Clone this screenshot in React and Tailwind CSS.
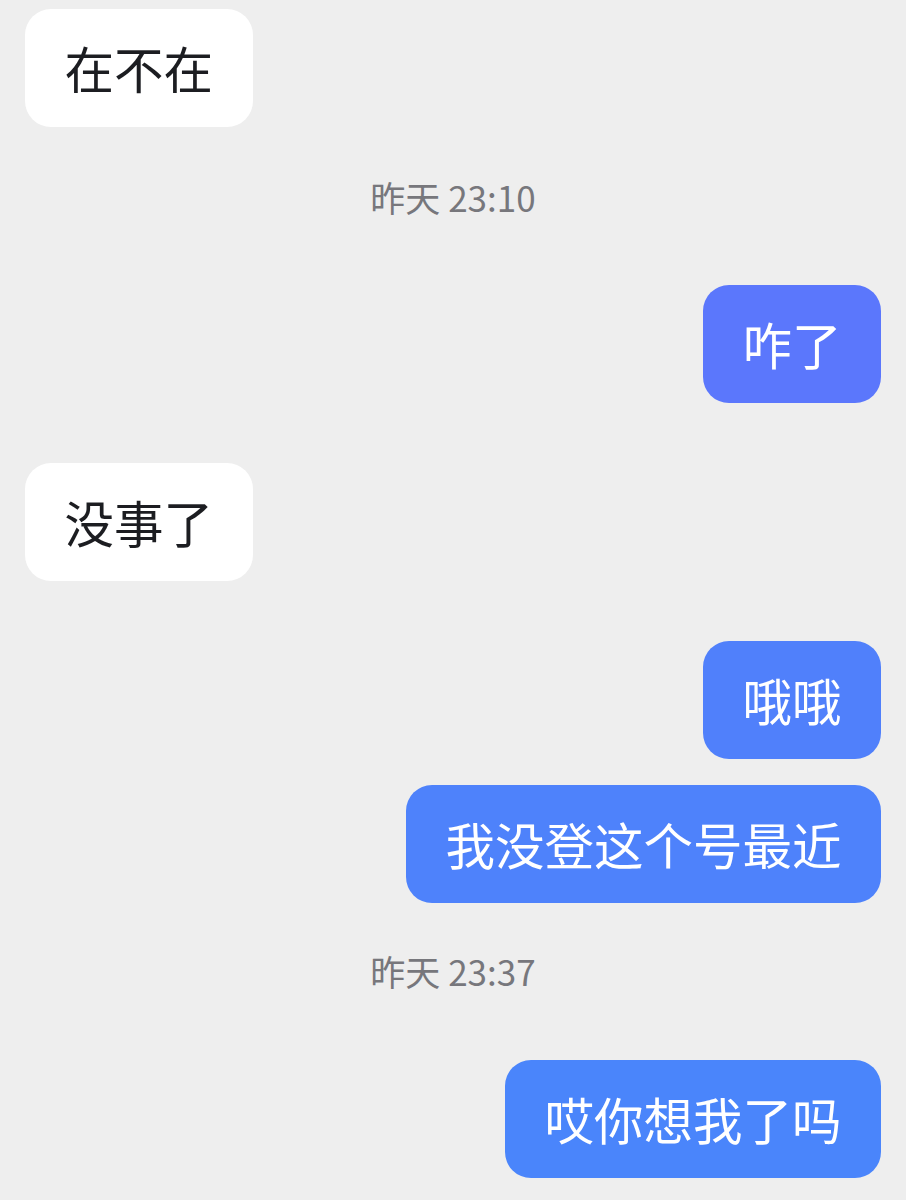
import React from "react";

const font = { fontFamily: '"Noto Sans CJK SC", "Noto Sans", sans-serif' };

function Bubble({ text, mine, color, className = "" }) {
  return (
    <div className={`flex ${mine ? "justify-end" : "justify-start"} ${className}`}>
      <div
        className={`rounded-[26px] px-[39.5px] h-[118px] flex items-center text-[49.5px] leading-none whitespace-nowrap ${
          mine ? "text-white" : "bg-white text-[#1c1d21]"
        } ${color || ""}`}
      >
        {text}
      </div>
    </div>
  );
}

function Stamp({ text, className = "" }) {
  return (
    <div className={`h-[48px] flex items-center justify-center text-[35px] text-[#77777c] ${className}`}>
      {text}
    </div>
  );
}

export default function App() {
  return (
    <div className="min-h-screen w-full bg-[#eeeeee] pt-[9px] px-[25px]" style={font}>
      <Bubble text="在不在" />
      <Stamp text="昨天 23:10" className="mt-[46px]" />
      <Bubble text="咋了" mine color="bg-[#5b77fc]" className="mt-[64px]" />
      <Bubble text="没事了" className="mt-[60px]" />
      <Bubble text="哦哦" mine color="bg-[#5080fb]" className="mt-[60px]" />
      <Bubble text="我没登这个号最近" mine color="bg-[#4e82fb]" className="mt-[26px]" />
      <Stamp text="昨天 23:37" className="mt-[44px]" />
      <Bubble text="哎你想我了吗" mine color="bg-[#4a85fb]" className="mt-[65px]" />
    </div>
  );
}
